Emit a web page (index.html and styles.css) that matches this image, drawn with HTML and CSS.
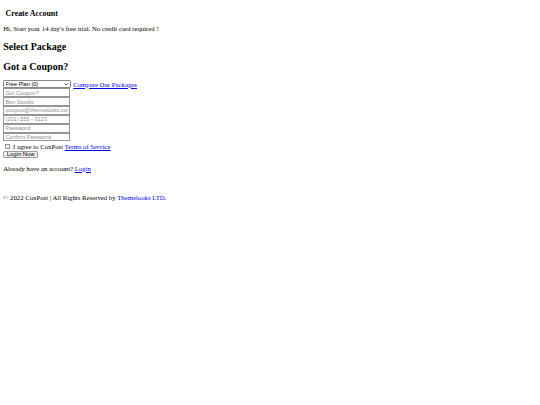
FILE: index.html
```html
<!DOCTYPE html>
<html lang="en">
<head>
<meta charset="utf-8">
<title>Create Account</title>
<link rel="stylesheet" href="styles.css">
</head>
<body>
<h3 class="title">Create Account</h3>
<p class="intro">Hi, Start your 14 day's free trial. No credit card required !</p>
<h2 class="heading">Select Package</h2>
<h2 class="heading">Got a Coupon?</h2>
<form class="signup">
  <div class="package-row">
    <span class="select-wrap">
      <select class="field select">
        <option>Free Plan (0)</option>
      </select>
      <svg class="chevron" viewBox="0 0 8 5" width="4" height="2.6" aria-hidden="true"><path d="M1 1 L4 4 L7 1" fill="none" stroke="#222" stroke-width="1.6"/></svg>
    </span>
    <a href="#" class="link">Compare Our Packages</a>
  </div>
  <input class="field input" type="text" placeholder="Got Coupon?">
  <input class="field input" type="text" placeholder="Ben Stocks">
  <input class="field input" type="email" placeholder="coxpost@themelooks.com">
  <input class="field input" type="tel" placeholder="(201) 555 - 0123">
  <input class="field input" type="password" placeholder="Password">
  <input class="field input" type="password" placeholder="Confirm Password">
  <label class="agree"><input class="check" type="checkbox"><span>I agree to CoxPost <a href="#" class="link">Terms of Service</a></span></label>
  <button class="btn" type="button">Login Now</button>
</form>
<p class="already">Already have an account? <a href="#" class="link">Login</a></p>
<p class="copy">© 2022 CoxPost | All Rights Reserved by <a href="#" class="link">Themelooks LTD</a>.</p>
</body>
</html>
```
FILE: styles.css
```css
html {
  background: #ffffff;
}
body {
  margin: 3.2px;
  font-family: "Liberation Serif", "Times New Roman", serif;
  font-size: 6.75px;
  color: #000000;
}
.title {
  font-size: 7.9px;
  font-weight: bold;
  margin: 5.4px 0 0;
  padding-left: 2.4px;
}
.intro {
  margin: 7px 0 0;
}
.heading {
  font-size: 10px;
  font-weight: bold;
  margin: 9px 0 8px;
}
.signup {
  display: flex;
  flex-direction: column;
  align-items: flex-start;
  margin-top: 8.8px;
}
.package-row {
  display: flex;
  align-items: center;
  gap: 2px;
  height: 8px;
}
.select-wrap {
  position: relative;
  display: block;
  width: 68px;
  height: 8px;
}
.chevron {
  position: absolute;
  right: 3px;
  top: 3px;
}
.link {
  color: #0000ee;
  text-decoration: underline;
}
.field {
  box-sizing: border-box;
  font-family: "Liberation Sans", Arial, sans-serif;
  font-size: 5.6px;
  color: #000000;
  margin: 0;
}
.select {
  appearance: none;
  -webkit-appearance: none;
  display: block;
  width: 68px;
  height: 8px;
  line-height: 6.6px;
  padding: 0 0 0 1.4px;
  border: 0.7px solid #8a8a8a;
  border-radius: 1px;
  background: #ffffff;
}
.input {
  display: block;
  width: 67px;
  height: 8.85px;
  padding: 0 1px 0 1.3px;
  border: 0.8px solid #959595;
  border-radius: 0;
  background: #ffffff;
}
.input::placeholder {
  color: #8c8c8c;
}
.agree {
  display: flex;
  align-items: center;
  height: 9.6px;
  gap: 2.6px;
}
.check {
  appearance: none;
  -webkit-appearance: none;
  box-sizing: border-box;
  width: 5.4px;
  height: 5.4px;
  margin: 0 0 0 1.8px;
  border: 0.7px solid #8c8c8c;
  border-radius: 0.8px;
  background: #ffffff;
}
.btn {
  box-sizing: border-box;
  font-family: "Liberation Sans", Arial, sans-serif;
  font-size: 5.9px;
  line-height: 5px;
  color: #000000;
  background: #efefef;
  border: 0.7px solid #9a9a9a;
  border-radius: 1.2px;
  height: 7.2px;
  width: 35px;
  padding: 0;
  margin: 0;
}
.already {
  margin: 6.5px 0 0;
}
.copy {
  margin: 22.3px 0 0;
}
```
